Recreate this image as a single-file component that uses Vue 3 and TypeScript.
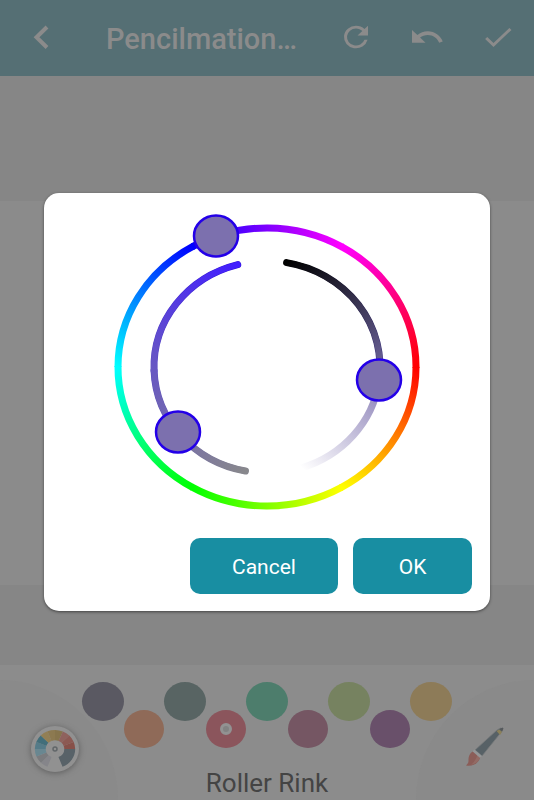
<script setup lang="ts">
import { ref } from 'vue'

interface Segment {
  d: string
  color: string
}

interface Stroke {
  id: string
  d: string
  x1: number
  y1: number
  x2: number
  y2: number
  from: string
  to: string
  width: number
  cap: 'butt' | 'round'
}

interface Swatch {
  name: string
  color: string
}

const CX = 223
const CY = 174

function point(deg: number, rx: number, ry: number): [number, number] {
  const a = (deg * Math.PI) / 180
  return [
    Number((CX + rx * Math.cos(a)).toFixed(2)),
    Number((CY + ry * Math.sin(a)).toFixed(2)),
  ]
}

// An elliptical arc whose colour runs along its chord from one stop to the next.
function stroke(
  id: string,
  start: number,
  end: number,
  rx: number,
  ry: number,
  from: string,
  to: string,
  width = 7,
  cap: 'butt' | 'round' = 'butt',
): Stroke {
  const a = point(start, rx, ry)
  const b = point(end, rx, ry)
  const c = point(cap === 'butt' ? end + (end > start ? 0.4 : -0.4) : end, rx, ry)
  return {
    id,
    d: `M${a[0]} ${a[1]}A${rx} ${ry} 0 0 ${end > start ? 1 : 0} ${c[0]} ${c[1]}`,
    x1: a[0],
    y1: a[1],
    x2: b[0],
    y2: b[1],
    from,
    to,
    width,
    cap,
  }
}

const hues = ['#ff0000', '#ffff00', '#00ff00', '#00ffff', '#0000ff', '#ff00ff', '#ff0000']

const strokes: Stroke[] = [
  ...hues
    .slice(0, 6)
    .map((c, i) => stroke(`hue-${i}`, i * 60, i * 60 + 60, 149, 139, c, hues[i + 1])),
  stroke('sat-edge-bottom', 101, 178, 113, 106, '#86868e', '#5a4cc0', 7, 'round'),
  stroke('sat-edge-top', 255, 178, 113, 106, '#2c10d8', '#5a4cc0', 7, 'round'),
  stroke('sat-bottom', 101, 178, 113, 106, '#88888c', '#6858c2', 6, 'round'),
  stroke('sat-top', 255, 178, 113, 106, '#421eff', '#6858c2', 6, 'round'),
  stroke('tint', 8, 72, 113, 106, '#8c82b8', '#ffffff'),
  stroke('shade-edge', -80, 8, 113, 106, '#000000', '#4a3f90', 7, 'round'),
  stroke('shade', -80, 8, 113, 106, '#000000', '#7268a4', 6, 'round'),
]

const thumbs = [
  { label: 'Hue', value: 250, x: 172, y: 43 },
  { label: 'Saturation', value: 26, x: 134, y: 239 },
  { label: 'Lightness', value: 56, x: 335, y: 187 },
]

const swatches: Swatch[] = [
  { name: 'Slate', color: '#5a5962' },
  { name: 'Orange', color: '#8f6a58' },
  { name: 'Steel', color: '#586463' },
  { name: 'Red', color: '#8b555c' },
  { name: 'Green', color: '#4d7d6c' },
  { name: 'Plum', color: '#755663' },
  { name: 'Lime', color: '#768260' },
  { name: 'Purple', color: '#69506a' },
  { name: 'Gold', color: '#8d7b58' },
]
const selected = ref('Red')
const open = ref(true)

function wedge(from: number, to: number): string {
  const p = (deg: number, r: number) => {
    const a = (deg * Math.PI) / 180
    return `${(30 + r * 1.03 * Math.cos(a)).toFixed(2)} ${(30 + r * 0.97 * Math.sin(a)).toFixed(2)}`
  }
  return `M${p(from, 9)}L${p(from, 19.6)}A20.2 19 0 0 1 ${p(to, 19.6)}L${p(to, 9)}A9.3 8.7 0 0 0 ${p(from, 9)}Z`
}

const wedges: Segment[] = [
  { d: wedge(0, 68), color: '#586268' },
  { d: wedge(112, 134), color: '#85858a' },
  { d: wedge(134, 157), color: '#7a7b7e' },
  { d: wedge(157, 180), color: '#698791' },
  { d: wedge(180, 202), color: '#557b88' },
  { d: wedge(202, 225), color: '#426e7a' },
  { d: wedge(225, 248), color: '#927f55' },
  { d: wedge(248, 270), color: '#8c7950' },
  { d: wedge(270, 293), color: '#86744c' },
  { d: wedge(293, 315), color: '#8f625d' },
  { d: wedge(315, 338), color: '#8c5953' },
  { d: wedge(338, 360), color: '#875049' },
]
</script>

<template>
  <div class="screen">
    <header class="bar">
      <button class="icon-button" type="button" aria-label="Back">
        <svg viewBox="0 0 36 34"><path d="M23 7 12.500 17.300 23 27.500" fill="none" stroke="currentColor" stroke-width="4" /></svg>
      </button>
      <h1 class="title">Pencilmation…</h1>
      <div class="actions">
        <button class="icon-button" type="button" aria-label="Reset">
          <svg viewBox="0 0 24 24" preserveAspectRatio="none">
            <path d="M17.650 6.350A7.960 7.960 0 0 0 12 4a8 8 0 1 0 7.730 10h-2.080A6 6 0 1 1 12 6c1.660 0 3.140.69 4.220 1.780L13 11h7V4z" fill="currentColor" />
          </svg>
        </button>
        <button class="icon-button" type="button" aria-label="Undo">
          <svg viewBox="0 0 24 24" preserveAspectRatio="none">
            <path d="M12.500 8c-2.650 0-5.050.99-6.900 2.600L2 7v9h9l-3.620-3.620c1.390-1.160 3.160-1.880 5.120-1.880 3.540 0 6.550 2.310 7.600 5.500l2.370-.78C21.080 11.030 17.150 8 12.500 8z" fill="currentColor" />
          </svg>
        </button>
        <button class="icon-button" type="button" aria-label="Done">
          <svg viewBox="0 0 24 24" preserveAspectRatio="none">
            <path d="M9 16.170 4.830 12l-1.420 1.410L9 19 21 7l-1.410-1.410z" fill="currentColor" />
          </svg>
        </button>
      </div>
    </header>

    <main class="stage">
      <div class="canvas"></div>
    </main>

    <footer class="palette">
      <button class="corner corner-left" type="button" aria-label="Color wheel">
        <svg class="wheel-icon" viewBox="0 0 60 60">
          <ellipse cx="30" cy="30" rx="24" ry="23" fill="#919191" />
          <path v-for="(w, i) in wedges" :key="i" :d="w.d" :fill="w.color" />
          <circle cx="30" cy="30" r="2" fill="none" stroke="#62676a" stroke-width="1.500" />
        </svg>
      </button>
      <div class="choices">
        <div class="swatches" role="radiogroup" aria-label="Roller Rink">
          <input
            v-for="s in swatches"
            :key="s.name"
            v-model="selected"
            class="swatch"
            type="radio"
            name="swatch"
            :value="s.name"
            :aria-label="s.name"
            :style="{ backgroundColor: s.color }"
          />
        </div>
        <p class="palette-name">Roller Rink</p>
      </div>
      <button class="corner corner-right" type="button" aria-label="Brush">
        <svg class="brush-icon" viewBox="0 0 42 42">
          <path d="M37.500 2 40 4 19 30 12 24 34 4Z" fill="#576166" stroke="#777a7b" stroke-width="0.800" />
          <path d="M33.500 5 36.500 3.500 39 6 37 9Z" fill="#8b8059" />
          <path d="M36.500 3 39.500 1.500 40.500 2.500 39 5.500Z" fill="#55595c" />
          <path d="M10.500 25C6 27.500 5.500 31 5.500 35 5.500 37 4 38.500 3 39.500 10 40.500 15 38 17.500 31Z" fill="#8b5d58" />
          <path d="M14.500 28Q13.500 34 8 39 15 37.500 17.500 31Z" fill="#936b65" />
          <path d="M10.500 24.500 18 31" stroke="#949697" stroke-width="2.600" />
        </svg>
      </button>
    </footer>

    <div v-if="open" class="overlay">
      <section class="dialog" role="dialog" aria-modal="true" aria-label="Color">
        <svg class="picker" viewBox="0 0 446 345">
          <defs>
            <linearGradient
              v-for="s in strokes"
              :id="s.id"
              :key="s.id"
              gradientUnits="userSpaceOnUse"
              :x1="s.x1"
              :y1="s.y1"
              :x2="s.x2"
              :y2="s.y2"
            >
              <stop offset="0" :stop-color="s.from" />
              <stop offset="1" :stop-color="s.to" />
            </linearGradient>
          </defs>
          <path
            v-for="s in strokes"
            :key="s.id"
            :d="s.d"
            fill="none"
            :stroke="`url(#${s.id})`"
            :stroke-width="s.width"
            :stroke-linecap="s.cap"
          />
          <ellipse
            v-for="t in thumbs"
            :key="t.label"
            :cx="t.x"
            :cy="t.y"
            rx="22"
            ry="20.500"
            fill="#7c70ae"
            stroke="#2400e8"
            stroke-width="2.500"
            role="slider"
            tabindex="0"
            :aria-label="t.label"
            :aria-valuenow="t.value"
          />
        </svg>
        <div class="buttons">
          <button class="button cancel" type="button" @click="open = false">Cancel</button>
          <button class="button ok" type="button" @click="open = false">OK</button>
        </div>
      </section>
    </div>
  </div>
</template>

<style>
body {
  margin: 0;
  background: #868686;
}
</style>

<style scoped>
.screen {
  position: relative;
  display: flex;
  flex-direction: column;
  min-height: 100vh;
  font-family: Roboto, "Liberation Sans", sans-serif;
  background: #868686;
}

button {
  border: 0;
  padding: 0;
  background: none;
  font: inherit;
  color: inherit;
  cursor: pointer;
}

.bar {
  display: flex;
  align-items: center;
  box-sizing: border-box;
  height: 76px;
  padding: 0 18px 2px 24px;
  background: #556f74;
  color: #8b8b8b;
}

.icon-button {
  flex: none;
  width: 36px;
  height: 34px;
}

.icon-button svg {
  display: block;
  width: 100%;
  height: 100%;
}

.title {
  flex: 1;
  min-width: 0;
  margin: 0 0 0 46px;
  padding-top: 3px;
  font-size: 29px;
  line-height: 36px;
  font-weight: 500;
  white-space: nowrap;
}

.actions {
  display: flex;
  gap: 35px;
}

.stage {
  flex: 1;
  display: flex;
  padding: 125px 0 80px;
  background: #868686;
}

.canvas {
  flex: 1;
  background: #8b8b8b;
}

.palette {
  display: flex;
  justify-content: space-between;
  height: 135px;
  background: #8c8c8c;
}

.corner {
  flex: none;
  display: flex;
  width: 118px;
  height: 120px;
  margin-top: 15px;
  background: #8a8a8a;
}

.corner-left {
  border-top-right-radius: 100%;
}

.corner-right {
  justify-content: flex-end;
  border-top-left-radius: 100%;
}

.wheel-icon {
  width: 60px;
  height: 60px;
  margin: 39px 0 0 25px;
  filter: drop-shadow(0 1px 3px #5c5c5c);
}

.brush-icon {
  width: 42px;
  height: 42px;
  margin: 46px 29px 0 0;
}

.choices {
  flex: 1;
  display: flex;
  flex-direction: column;
  align-items: center;
  min-width: 0;
}

.swatches {
  position: relative;
  z-index: 1;
  display: flex;
  margin: 17px -40px 0;
}

.swatch {
  appearance: none;
  flex: none;
  display: grid;
  place-items: center;
  width: 42px;
  height: 39px;
  margin: 0;
  border-radius: 50%;
}

.swatch:nth-child(even) {
  width: 40px;
  height: 38px;
  margin-top: 28px;
}

.swatch:checked::before {
  content: "";
  box-sizing: border-box;
  width: 12px;
  height: 12px;
  border: 3px solid #929292;
  border-radius: 50%;
  background: #828282;
}

.palette-name {
  margin: 19px 0 0;
  font-size: 26px;
  line-height: 32px;
  color: #444444;
}

.overlay {
  position: absolute;
  inset: 0;
  z-index: 2;
  display: flex;
  align-items: center;
  padding: 4px 44px 0;
}

.dialog {
  flex: 1;
  border-radius: 15px;
  background: #ffffff;
  box-shadow: 0 1px 3px rgba(0, 0, 0, 0.5);
}

.picker {
  display: block;
  width: 100%;
}

.buttons {
  display: flex;
  justify-content: flex-end;
  gap: 15px;
  padding: 0 18px 17px;
}

.button {
  height: 56px;
  padding-top: 2px;
  border-radius: 10px;
  background: #188ea2;
  color: #ffffff;
  font-size: 21px;
  line-height: 24px;
}

.cancel {
  width: 148px;
}

.ok {
  width: 119px;
}
</style>
